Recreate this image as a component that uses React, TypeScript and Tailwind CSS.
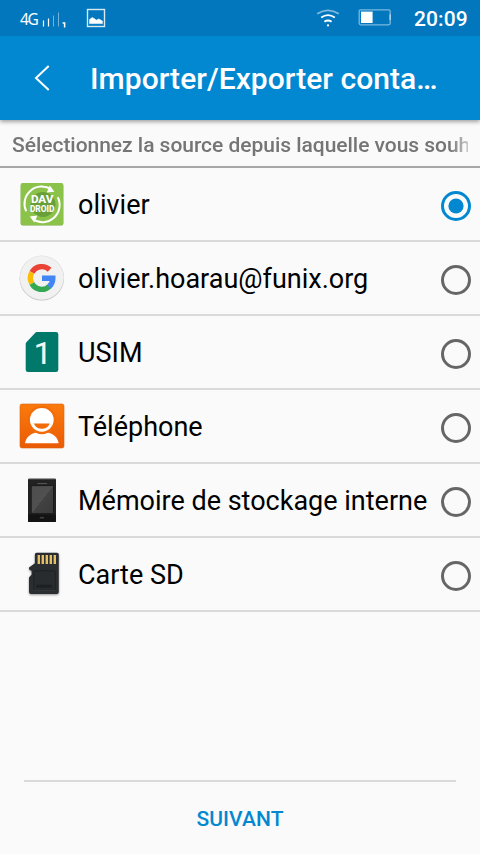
import { useState, type ReactNode } from "react";

function DavdroidIcon() {
  return (
    <svg viewBox="0 0 48 48" className="size-12">
      <rect x="2.7" y="3.6" width="42.6" height="42" rx="2" fill="#7aa842" />
      <rect x="2.7" y="3" width="42.6" height="42" rx="2" fill="#8bc34a" />
      <circle cx="25" cy="24.5" r="12.5" fill="#689f38" />
      <path d="M8.2 31.2A17.2 17.2 0 0 1 33.5 9.6" fill="none" stroke="#fff" strokeWidth="2" />
      <path d="M39.8 17.2A17.2 17.2 0 0 1 14.5 39" fill="none" stroke="#fff" strokeWidth="2" />
      <path d="M31.8 5.6l4.6 6.2-7.6.8z" fill="#fff" />
      <path d="M16.4 42.6l-4.6-6.2 7.6-.8z" fill="#fff" />
      <text x="24.2" y="23.4" textAnchor="middle" fontSize="11.6" textLength="22.5" lengthAdjust="spacingAndGlyphs" fontWeight="800" fill="#fff" className="font-[Roboto,sans-serif]">
        DAV
      </text>
      <text x="24.2" y="32.2" textAnchor="middle" fontSize="8.8" textLength="24.5" lengthAdjust="spacingAndGlyphs" fontWeight="800" fill="#fff" className="font-[Roboto,sans-serif]">
        DROID
      </text>
    </svg>
  );
}

function GoogleIcon() {
  return (
    <svg viewBox="0 0 48 48" className="size-12">
      <circle cx="23.8" cy="24.4" r="22.2" fill="#c4c4c4" />
      <circle cx="23.8" cy="23.7" r="22.2" fill="#dedede" />
      <circle cx="23.8" cy="23.7" r="21.6" fill="#f1f1f1" />
      <g fill="none" strokeWidth="5.4">
        <path d="M13.9 18.4A11.3 11.3 0 0 1 31.6 15.8" stroke="#ea4335" />
        <path d="M13.9 29.6A11.3 11.3 0 0 1 13.9 18.4" stroke="#fbbc05" />
        <path d="M31.3 32.5A11.3 11.3 0 0 1 13.9 29.6" stroke="#34a853" />
        <path d="M24 24.2H34.8A11.3 11.3 0 0 1 31 32.7" stroke="#4285f4" />
      </g>
    </svg>
  );
}

function SimIcon() {
  return (
    <svg viewBox="0 0 48 48" className="size-12">
      <path d="M18.7 4H38a2.3 2.3 0 0 1 2.3 2.3v35.4A2.3 2.3 0 0 1 38 44H10a2.3 2.3 0 0 1-2.3-2.3V16q0-1 .7-1.8l8.9-9.4q.6-.8 1.4-.8z" fill="#00796b" />
      <text x="24.8" y="36" textAnchor="middle" fontSize="32" fill="#f1f8f7" stroke="#f1f8f7" strokeWidth=".2" className="font-[Roboto,sans-serif]">
        1
      </text>
    </svg>
  );
}

function ContactIcon() {
  return (
    <svg viewBox="0 0 48 48" className="size-12">
      <defs>
        <linearGradient id="contact" x1="0" y1="0" x2="0" y2="1">
          <stop offset="0" stopColor="#fb7a0c" />
          <stop offset="1" stopColor="#ea5b05" />
        </linearGradient>
      </defs>
      <rect x="2" y="2" width="44" height="44" rx="2" fill="url(#contact)" stroke="#d9620f" strokeWidth=".6" />
      <path d="M7 41.2C8 35 13 31.5 18 30.5H29.5C35 31.5 39.6 35 40.6 41.2z" fill="#fff" />
      <circle cx="23.8" cy="18" r="14.2" fill="#f26c09" />
      <circle cx="23.8" cy="17.8" r="11.9" fill="#fff" />
      <path d="M15.8 21.4H31.8A8.7 8.7 0 0 1 15.8 21.4z" fill="#f26c09" />
    </svg>
  );
}

function PhoneIcon() {
  return (
    <svg viewBox="0 0 48 48" className="size-12">
      <defs>
        <linearGradient id="glass" x1="0" y1="0" x2="1" y2="1">
          <stop offset="0" stopColor="#4e4e4e" />
          <stop offset=".5" stopColor="#505050" />
          <stop offset=".5" stopColor="#424242" />
          <stop offset="1" stopColor="#3a3a3a" />
        </linearGradient>
      </defs>
      <rect x="10" y="2.8" width="28" height="43.2" rx="1" fill="#222" />
      <path d="M10.5 3.2h27" stroke="#4c4c4c" />
      <rect x="19.5" y="7" width="9.6" height="1.1" fill="#555" />
      <rect x="13.2" y="9.7" width="22.3" height="28" fill="url(#glass)" stroke="#141414" strokeWidth=".8" />
      <rect x="10" y="38.5" width="28" height="7.5" rx="1" fill="#131313" />
      <rect x="21.2" y="40.3" width="5.4" height="2.8" rx=".6" fill="#3a3a3a" stroke="#050505" strokeWidth=".6" />
    </svg>
  );
}

function SdCardIcon() {
  return (
    <svg viewBox="0 0 48 48" className="size-12 drop-shadow-[0_1px_1px_rgba(0,0,0,0.4)]">
      <path d="M18.5 2.8H39a1.8 1.8 0 0 1 1.8 1.8V42a2 2 0 0 1-2 2H13a2 2 0 0 1-2-2V27.5l2.6-3v-3.6L11 19.3V17.5l5.9-4.2V4.6q0-1.8 1.6-1.8z" fill="#2b2e30" />
      <path d="M20.8 5v9M24.8 5v9M28.8 5v9M32.8 5v9M36.8 5v9" stroke="#e6bf62" strokeWidth="2.4" />
      <rect x="15.8" y="20.8" width="21.4" height="19" rx="1.5" fill="#292c2e" stroke="#1b1e20" strokeWidth=".8" />
      <path d="M18.5 36.2h15.5" stroke="#1b1d1f" strokeWidth="3" strokeDasharray="2.4 .5" />
      <path d="M16 40.2h21" stroke="#44484a" strokeWidth=".6" />
    </svg>
  );
}

const sources: { label: string; icon: ReactNode }[] = [
  { label: "olivier", icon: <DavdroidIcon /> },
  { label: "olivier.hoarau@funix.org", icon: <GoogleIcon /> },
  { label: "USIM", icon: <SimIcon /> },
  { label: "Téléphone", icon: <ContactIcon /> },
  { label: "Mémoire de stockage interne", icon: <PhoneIcon /> },
  { label: "Carte SD", icon: <SdCardIcon /> },
];

function Radio({ checked }: { checked: boolean }) {
  return (
    <svg viewBox="0 0 30 30" className={`mt-1 size-[30px] shrink-0 ${checked ? "text-[#0288d1]" : "text-[#666]"}`}>
      <circle cx="15" cy="15" r="13.5" fill="none" stroke="currentColor" strokeWidth="3" />
      {checked && <circle cx="15" cy="15" r="7.6" fill="currentColor" />}
    </svg>
  );
}

function StatusBar() {
  return (
    <div className="relative z-10 flex h-9 shrink-0 items-center bg-[#0277bd] pl-5 pr-[11px] text-white">
      <span className="mt-[3px] w-[18px] font-['Noto_Sans',sans-serif] text-[15.5px] leading-none tracking-[-1.4px]">4G</span>
      <svg viewBox="0 0 26 18" className="ml-[3px] mt-[3px] h-[18px] w-[26px]" fill="none" stroke="#fff">
        <path d="M2.5 9.5v6M7.5 7.5v8" strokeWidth="1.2" />
        <path d="M12.5 4.5v11M17.5 1.5v14" opacity=".45" />
        <path d="M21.6 12h2v4.6" strokeWidth="1.5" />
      </svg>
      <svg viewBox="0 0 20 20" className="ml-[19px] size-5">
        <rect x="1.5" y="1.5" width="17" height="17" fill="none" stroke="#d6eaf6" strokeWidth="1.4" />
        <path d="M3.6 15.6v-4.2l2.6-1.8 2.4 1.2 1.6 1.4 2.6-1.2 3.6 2v2.6z" fill="#fff" stroke="#fff" strokeWidth=".6" />
      </svg>
      <svg viewBox="0 0 24 18" className="ml-auto h-[18px] w-6" fill="none" stroke="#fff" strokeWidth="1.8">
        <path d="M1.2 4.8Q12-2.2 22.8 4.8" opacity=".5" />
        <path d="M5.2 8.6q6.8-4.8 13.6 0M8.4 12.8q3.6-2.6 7.2 0" />
        <circle cx="12" cy="16.4" r="1.1" fill="#fff" stroke="none" />
      </svg>
      <svg viewBox="0 0 34 18" className="ml-[18px] mt-[-3px] h-[18px] w-[34px]">
        <rect x="1.2" y="1.8" width="31" height="15" rx="1.5" fill="none" stroke="#7ab8dd" strokeWidth="1.3" />
        <path d="M32.2 6.5v5.5" stroke="#a5d0e9" strokeWidth="1.6" />
        <rect x="3" y="3.6" width="11.6" height="11.4" fill="#fff" />
      </svg>
      <span className="ml-[22px] mt-[2px] w-[55px] whitespace-nowrap text-[21px] font-medium leading-none tracking-[0.1px]">20:09</span>
    </div>
  );
}

export default function App() {
  const [selected, setSelected] = useState(0);

  return (
    <div className="flex h-[854px] w-[480px] flex-col overflow-hidden bg-[#fafafa] font-[Roboto,sans-serif]">
      <StatusBar />
      <header className="relative flex h-[84px] shrink-0 items-center bg-[#0288d1] pl-[34px] text-white shadow-[0_2px_4px_rgba(0,0,0,0.35)]">
        <svg viewBox="0 0 18 28" className="h-7 w-[18px]" fill="none" stroke="#fff" strokeWidth="2">
          <path d="M14.7 2L2 14l12.7 12" />
        </svg>
        <h1 className="ml-[38px] mt-[2px] w-[352px] truncate text-[30px] font-medium leading-9 tracking-[0.05px]">
          Importer/Exporter contacts
        </h1>
      </header>

      <div className="flex h-12 shrink-0 items-center border-b-2 border-[#a8a8a8] px-3 pt-1">
        <p className="w-full overflow-hidden whitespace-nowrap text-[21px] font-medium leading-7 tracking-[-0.03px] text-[#757575] [mask-image:linear-gradient(to_right,#000_438px,transparent_466px)]">
          Sélectionnez la source depuis laquelle vous souhaitez
        </p>
      </div>

      <ul>
        {sources.map((s, i) => (
          <li
            key={s.label}
            onClick={() => setSelected(i)}
            className="flex h-[74px] items-center border-b-2 border-[#dadada] pl-[18px] pr-[9px]"
          >
            {s.icon}
            <span className="ml-3 mt-[2px] flex-1 whitespace-nowrap text-[27px] leading-8 text-black">{s.label}</span>
            <Radio checked={i === selected} />
          </li>
        ))}
      </ul>

      <footer className="mx-6 mt-auto flex h-[74px] shrink-0 items-center justify-center border-t-2 border-[#dadada]">
        <button className="mt-px text-[21px] font-medium leading-7 tracking-[0.1px] text-[#0288d1]">SUIVANT</button>
      </footer>
    </div>
  );
}
